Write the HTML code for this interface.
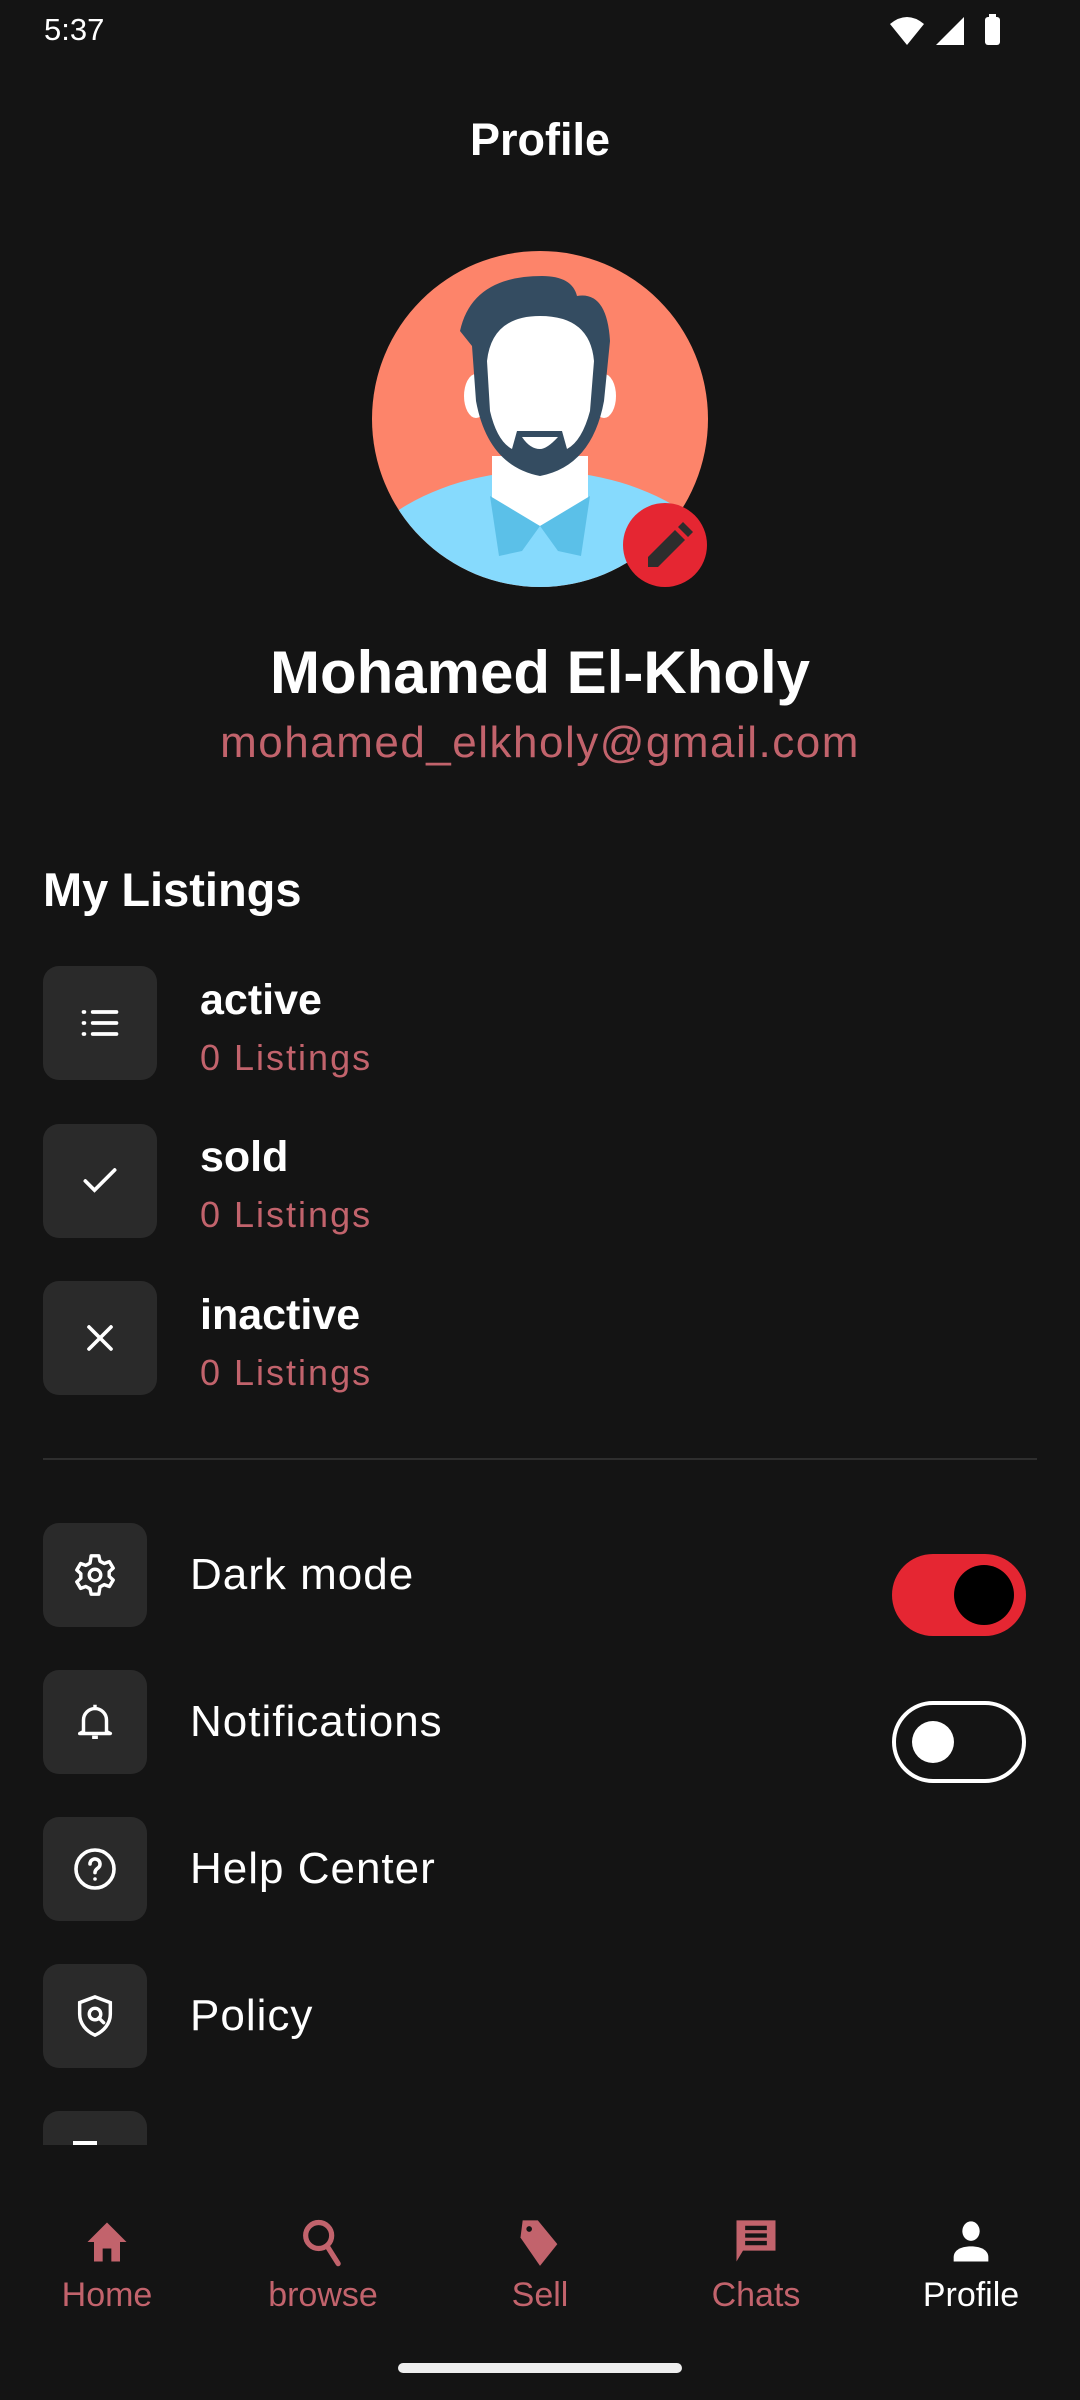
<!DOCTYPE html>
<html><head><meta charset="utf-8"><style>
*{margin:0;padding:0;box-sizing:border-box}
body{width:1080px;height:2400px;background:#141414;font-family:"Liberation Sans",sans-serif;color:#fff;position:relative;overflow:hidden}
.a{position:absolute}
.box{position:absolute;left:43px;background:#2a2a2a;border-radius:16px;display:flex;align-items:center;justify-content:center}
.pink{color:#c2636c}
.t{position:absolute;left:200px;font-size:43px;font-weight:bold}
.s{position:absolute;left:200px;font-size:36px;color:#c2636c;letter-spacing:2px}
.st{position:absolute;left:190px;font-size:44px;letter-spacing:1px}
.nav{position:absolute;top:2216px;width:160px;text-align:center;font-size:34px;color:#c2636c}
.nav svg{display:block;margin:0 auto 8px}
</style></head><body>
<div class="a" style="left:44px;top:12px;font-size:31px">5:37</div>
<svg class="a" style="left:888px;top:14px" width="120" height="34" viewBox="0 0 120 34">
<path d="M2 10 Q19 -4 36 10 L19 31 Z" fill="#fff"/>
<path d="M48 31 L76 3 L76 31 Z" fill="#fff"/>
<rect x="97" y="3" width="15" height="28" rx="3" fill="#fff"/><rect x="101" y="0" width="7" height="4" fill="#fff"/>
</svg>
<div class="a" style="left:0;width:1080px;top:114px;text-align:center;font-size:45px;font-weight:bold">Profile</div>

<svg class="a" style="left:372px;top:251px" width="336" height="336" viewBox="0 0 336 336">
<defs><clipPath id="c"><circle cx="168" cy="168" r="168"/></clipPath></defs>
<circle cx="168" cy="168" r="168" fill="#fd846a"/>
<g clip-path="url(#c)">
<ellipse cx="168" cy="370" rx="210" ry="150" fill="#86dafd"/>
<path d="M120 205 L216 205 L216 250 L168 275 L120 250Z" fill="#fff"/>
<path d="M118 245 L168 275 L150 300 L127 305Z" fill="#5bc0e8"/>
<path d="M218 245 L168 275 L186 300 L209 305Z" fill="#5bc0e8"/>
<ellipse cx="104" cy="145" rx="12" ry="22" fill="#fff"/>
<ellipse cx="232" cy="145" rx="12" ry="22" fill="#fff"/>
<path d="M88 80 Q100 25 170 25 Q200 25 205 45 Q235 40 238 90 L232 150 Q220 215 168 225 Q116 215 104 150 L100 95 Z" fill="#344c61"/>
<path d="M115 110 Q120 65 168 65 Q218 65 222 110 L218 160 Q210 190 195 198 L190 180 L145 180 L140 198 Q125 190 118 160Z" fill="#fff"/>
<path d="M150 186 L186 186 Q175 198 168 198 Q158 198 150 186Z" fill="#fff"/>
</g>
<circle cx="293" cy="294" r="42" fill="#e52632"/>
<path d="M276 316 L276 306 L303 279 L313 289 L286 316Z M306 276 L311 271 L321 281 L316 286Z" fill="#2d2d2d"/>
</svg>

<div class="a" style="left:0;width:1080px;top:638px;text-align:center;font-size:60px;font-weight:bold">Mohamed El-Kholy</div>
<div class="a pink" style="left:0;width:1080px;top:718px;text-align:center;font-size:44px;letter-spacing:1.5px">mohamed_elkholy@gmail.com</div>

<div class="a" style="left:43px;top:862px;font-size:47px;font-weight:bold">My Listings</div>

<div class="box" style="top:966px;width:114px;height:114px"><svg width="44" height="44" viewBox="0 0 24 24" fill="none" stroke="#fff" stroke-width="2" stroke-linecap="round"><path d="M8 6h13M8 12h13M8 18h13M3 6h.5M3 12h.5M3 18h.5"/></svg></div>
<div class="t" style="top:976px">active</div><div class="s" style="top:1037px">0 Listings</div>
<div class="box" style="top:1124px;width:114px;height:114px"><svg width="44" height="44" viewBox="0 0 24 24" fill="none" stroke="#fff" stroke-width="2" stroke-linecap="round"><path d="M4 12l5 5L20 6"/></svg></div>
<div class="t" style="top:1133px">sold</div><div class="s" style="top:1194px">0 Listings</div>
<div class="box" style="top:1281px;width:114px;height:114px"><svg width="44" height="44" viewBox="0 0 24 24" fill="none" stroke="#fff" stroke-width="2" stroke-linecap="round"><path d="M6 6l12 12M18 6L6 18"/></svg></div>
<div class="t" style="top:1291px">inactive</div><div class="s" style="top:1352px">0 Listings</div>

<div class="a" style="left:43px;top:1458px;width:994px;height:2px;background:#2e2e2e"></div>

<div class="a" style="left:0;top:0;width:1080px;height:2145px;overflow:hidden">
<div class="box" style="top:1523px;width:104px;height:104px"><svg width="46" height="46" viewBox="0 0 24 24" fill="none" stroke="#fff" stroke-width="1.8" stroke-linejoin="round"><path d="M10 2h4l.6 2.8 2.2 1.2 2.7-1 2 3.4-2.1 1.9v2.4l2.1 1.9-2 3.4-2.7-1-2.2 1.2L14 22h-4l-.6-2.8-2.2-1.2-2.7 1-2-3.4 2.1-1.9V11.3L2.5 9.4l2-3.4 2.7 1 2.2-1.2Z"/><circle cx="12" cy="12" r="3"/></svg></div>
<div class="st" style="top:1550px">Dark mode</div>
<div class="a" style="left:892px;top:1554px;width:134px;height:82px;border-radius:41px;background:#e52632"></div>
<div class="a" style="left:954px;top:1565px;width:60px;height:60px;border-radius:30px;background:#000"></div>

<div class="box" style="top:1670px;width:104px;height:104px"><svg width="46" height="46" viewBox="0 0 24 24" fill="none" stroke="#fff" stroke-width="1.8" stroke-linejoin="round"><path d="M6 17V11a6 6 0 0112 0v6l2 1H4Z M12 3v2 M10.5 20h3"/></svg></div>
<div class="st" style="top:1697px">Notifications</div>
<div class="a" style="left:892px;top:1701px;width:134px;height:82px;border-radius:41px;border:4px solid #fff"></div>
<div class="a" style="left:912px;top:1721px;width:42px;height:42px;border-radius:21px;background:#fff"></div>

<div class="box" style="top:1817px;width:104px;height:104px"><svg width="48" height="48" viewBox="0 0 24 24" fill="none" stroke="#fff" stroke-width="1.8" stroke-linecap="round"><circle cx="12" cy="12" r="9.5"/><path d="M9.5 9.5a2.5 2.5 0 114 2c-1 .7-1.5 1.2-1.5 2.3M12 17h.01"/></svg></div>
<div class="st" style="top:1844px">Help Center</div>

<div class="box" style="top:1964px;width:104px;height:104px"><svg width="46" height="46" viewBox="0 0 24 24" fill="none" stroke="#fff" stroke-width="1.8" stroke-linecap="round"><path d="M12 2l8 3v6c0 5-3.5 9-8 11-4.5-2-8-6-8-11V5Z"/><circle cx="12" cy="11" r="3"/><path d="M14 13l2.5 2.5"/></svg></div>
<div class="st" style="top:1991px">Policy</div>

<div class="box" style="top:2111px;width:104px;height:104px"><div style="position:absolute;top:30px;left:30px;width:24px;height:5px;background:#fff"></div></div>
</div>

<div class="nav" style="left:27px"><svg width="54" height="52" viewBox="0 0 24 24"><path d="M12 3L3 12h3v9h4v-6h4v6h4v-9h3Z" fill="#c2636c"/></svg>Home</div>
<div class="nav" style="left:243px"><svg width="54" height="52" viewBox="0 0 24 24" fill="none" stroke="#c2636c" stroke-width="2.4" stroke-linecap="round"><circle cx="10" cy="9" r="6"/><path d="M14 14l5 8"/></svg>browse</div>
<div class="nav" style="left:460px"><svg width="54" height="52" viewBox="0 0 24 24"><path d="M4 2h7l9 11-8 10L3 10Z" fill="#c2636c"/><circle cx="7" cy="6" r="1.3" fill="#141414"/></svg>Sell</div>
<div class="nav" style="left:676px"><svg width="54" height="52" viewBox="0 0 24 24"><path d="M3 2h18v14H6l-3 5Z" fill="#c2636c"/><path d="M7 5.5h10M7 9h10M7 12.5h10" stroke="#141414" stroke-width="2"/></svg>Chats</div>
<div class="nav" style="left:891px;color:#fff"><svg width="54" height="52" viewBox="0 0 24 24"><ellipse cx="12" cy="7" rx="4" ry="4.5" fill="#fff"/><path d="M4 21v-2c0-3 3-5 8-5s8 2 8 5v2Z" fill="#fff"/></svg>Profile</div>

<div class="a" style="left:398px;top:2363px;width:284px;height:10px;border-radius:5px;background:#eee"></div>
</body></html>
